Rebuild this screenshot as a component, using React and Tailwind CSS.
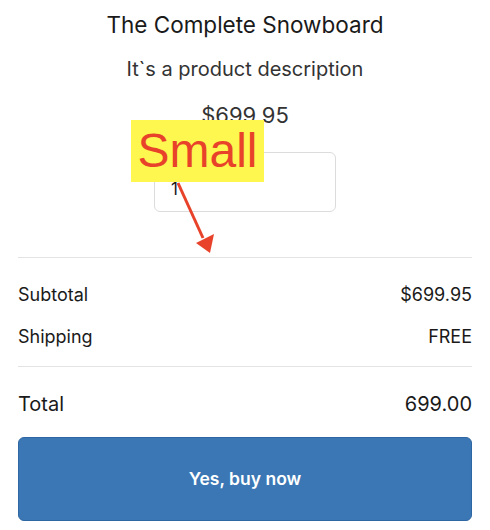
export default function App() {
	return (
		<div className="relative w-[490px] h-[530px] bg-white text-[#1a1a1a] font-['Inter',sans-serif] overflow-hidden">
			{/* Product */}
			<div className="flex flex-col items-center pt-[10px]">
				<h1 className="text-[22.5px] leading-[30px]">The Complete Snowboard</h1>
				<p className="mt-[16px] text-[20px] leading-[26px] text-[#333]">It`s a product description</p>
				<p className="mt-[20px] text-[22px] leading-[26px] text-[#333]">$699.95</p>
				<div className="mt-[24px] w-[182px] h-[60px] rounded-[6px] border border-[#dcdcdc] flex items-end pl-[16px] pb-[12px]">
					<span className="text-[17px] leading-[20px]">1</span>
				</div>
			</div>

			{/* Summary */}
			<div className="mx-[18px] mt-[45px] border-t border-[#e3e3e3]">
				<div className="flex justify-between pt-[25px] text-[18px] leading-[24px]">
					<span>Subtotal</span>
					<span>$699.95</span>
				</div>
				<div className="flex justify-between pt-[18px] text-[18px] leading-[24px]">
					<span>Shipping</span>
					<span>FREE</span>
				</div>
				<div className="mt-[17px] border-t border-[#e3e3e3] flex justify-between pt-[24px] text-[20px] leading-[26px]">
					<span>Total</span>
					<span>699.00</span>
				</div>
				<button className="mt-[20px] w-full h-[84px] rounded-[6px] bg-[#3a77b4] border border-[#2e67a3] text-white text-[17.5px] font-semibold">
					Yes, buy now
				</button>
			</div>

			{/* Annotation */}
			<div className="absolute left-[131px] top-[120px] w-[133px] h-[62px] bg-[#fdf74f] flex items-center justify-center">
				<span className="text-[#e8432a] text-[48px] leading-none font-['Liberation_Sans',sans-serif]">Small</span>
			</div>
			<svg className="absolute left-0 top-0" width="490" height="530">
				<line x1="178" y1="183" x2="203" y2="238" stroke="#e8432a" strokeWidth="3" />
				<polygon points="196,243 214,234 210,253" fill="#e8432a" />
			</svg>
		</div>
	);
}
